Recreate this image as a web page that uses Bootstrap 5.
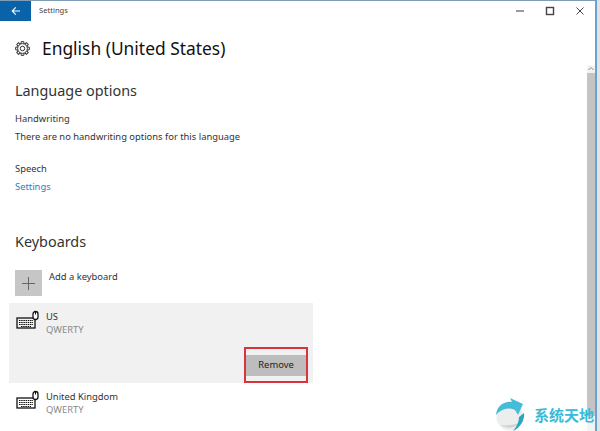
<!DOCTYPE html>
<html lang="en">
  <head>
    <meta charset="UTF-8" />
    <meta name="viewport" content="width=device-width, initial-scale=1.0" />
    <title>Settings</title>
    <link
      href="https://cdn.jsdelivr.net/npm/bootstrap@5.3.0/dist/css/bootstrap.min.css"
      rel="stylesheet"
    />
    <style>
      html, body { height: 431px; overflow: hidden; }
      body {
        background-color: #fff;
        font-family: "Noto Sans", "Open Sans", sans-serif;
        color: #222;
      }
      .app-window {
        position: relative;
        width: 595px;
        height: 431px;
        overflow: hidden;
        border-top: 1px solid #7f9db9;
        background: #fff;
      }
      .desk-edge {
        position: absolute;
        top: 0;
        left: 595px;
        width: 5px;
        height: 431px;
        background: linear-gradient(to right, #6f9fcf 0 2px, #dfe3ea 2px);
      }
      .title-strip { height: 20px; }
      .back-tile {
        width: 31px;
        height: 20px;
        background: #0a62a9;
      }
      .title-text { font-size: 7.6px; color: #444; padding-left: 8px; }
      .win-btn { width: 30px; }
      .head-row { margin-top: 14px; }
      .page-title { font-size: 17.4px; line-height: 26px; color: #111; margin: 0; font-weight: 400; }
      .gear-box { width: 15px; margin-left: 15px; margin-right: 12px; }
      .sect-head { font-size: 14.4px; line-height: 20px; font-weight: 400; color: #333; margin: 0 0 0 15px; }
      .lang-head { margin-top: 20px; }
      .key-head { margin-top: 36px; }
      .body-line { font-size: 9.4px; line-height: 18px; margin-left: 15px; color: #333; }
      .line-a { margin-top: 9px; }
      .line-b { margin-top: 14px; }
      .blue-link { color: #2a80bc; text-decoration: none; }
      .add-row { margin-top: 18px; margin-bottom: 7px; }
      .add-tile { width: 27px; height: 26px; background: #c6c6c6; margin-left: 15px; }
      .add-label { font-size: 9.4px; line-height: 14px; color: #333; padding-left: 7px; }
      .kb-row { width: 304px; margin-left: 9px; padding-left: 7px; padding-top: 7px; }
      .kb-row.is-open { background: #f1f1f1; height: 80px; position: relative; }
      .kb-name { font-size: 9.4px; line-height: 13px; color: #333; }
      .kb-sub { font-size: 9.4px; line-height: 13px; color: #8a8a8a; }
      .kb-ic { width: 24px; margin-right: 6px; }
      .remove-btn {
        position: absolute;
        left: 237px;
        top: 52px;
        width: 60px;
        height: 21px;
        padding: 0;
        border: 0;
        border-radius: 0;
        background: #bdbdbd;
        color: #222;
        font-size: 9.4px;
      }
      .red-mark {
        position: absolute;
        left: 235px;
        top: 44px;
        width: 64px;
        height: 36px;
        border: 2px solid #d9343c;
        pointer-events: none;
      }
      .scroll-rail {
        position: absolute;
        top: 64px;
        left: 587px;
        width: 8px;
        height: 367px;
        background: #f3f3f3;
      }
      .scroll-thumb { position: absolute; top: 8px; left: 0; width: 8px; height: 343px; background: #c4c4c4; }
      .brand-mark { position: absolute; left: 495px; top: 398px; }
      .brand-text {
        position: absolute;
        left: 534px;
        top: 404px;
        font-family: "Noto Sans CJK SC", sans-serif;
        font-weight: 700;
        font-size: 15px;
        line-height: 21px;
        color: #35bcd8;
        white-space: nowrap;
      }
    </style>
  </head>
  <body>
    <div class="app-window">
      <!-- Title bar -->
      <div class="title-strip d-flex align-items-center">
        <div class="back-tile d-flex align-items-center justify-content-center">
          <svg width="10" height="10" viewBox="0 0 10 10" fill="none" stroke="#fff" stroke-width="1.1"><path d="M9 5H1.2M4.8 1.4 1.2 5l3.6 3.6"/></svg>
        </div>
        <div class="title-text flex-grow-1">Settings</div>
        <div class="win-btn d-flex justify-content-center">
          <svg width="10" height="10" viewBox="0 0 10 10" stroke="#555" stroke-width="1.2"><path d="M1 5h8"/></svg>
        </div>
        <div class="win-btn d-flex justify-content-center">
          <svg width="10" height="10" viewBox="0 0 10 10" fill="none" stroke="#444" stroke-width="1.4"><rect x="1.5" y="1.5" width="7" height="7"/></svg>
        </div>
        <div class="win-btn d-flex justify-content-center">
          <svg width="10" height="10" viewBox="0 0 10 10" stroke="#444" stroke-width="1"><path d="M1.5 1.5l7 7M8.5 1.5l-7 7"/></svg>
        </div>
      </div>

      <!-- Heading -->
      <div class="head-row d-flex align-items-center">
        <div class="gear-box d-flex">
          <svg width="15" height="15" viewBox="0 0 24 24" fill="none" stroke="#333" stroke-width="1.6">
            <path d="M9.500 4.500 10 1h4l.5 3.500"/>
            <path transform="rotate(45 12 12)" d="M9.500 4.500 10 1h4l.5 3.500"/>
            <path transform="rotate(90 12 12)" d="M9.500 4.500 10 1h4l.5 3.500"/>
            <path transform="rotate(135 12 12)" d="M9.500 4.500 10 1h4l.5 3.500"/>
            <path transform="rotate(180 12 12)" d="M9.500 4.500 10 1h4l.5 3.500"/>
            <path transform="rotate(225 12 12)" d="M9.500 4.500 10 1h4l.5 3.500"/>
            <path transform="rotate(270 12 12)" d="M9.500 4.500 10 1h4l.5 3.500"/>
            <path transform="rotate(315 12 12)" d="M9.500 4.500 10 1h4l.5 3.500"/>
            <circle cx="12" cy="12" r="7.800"/>
            <circle cx="12" cy="12" r="3.600"/>
          </svg>
        </div>
        <h1 class="page-title">English (United States)</h1>
      </div>

      <h2 class="sect-head lang-head">Language options</h2>
      <div class="body-line line-a">Handwriting</div>
      <div class="body-line">There are no handwriting options for this language</div>
      <div class="body-line line-b">Speech</div>
      <div class="body-line"><a href="#" class="blue-link">Settings</a></div>
      <h2 class="sect-head key-head">Keyboards</h2>

      <!-- Add a keyboard -->
      <div class="d-flex add-row">
        <div class="add-tile d-flex align-items-center justify-content-center">
          <svg width="13" height="13" viewBox="0 0 13 13" stroke="#666" stroke-width="1"><path d="M6.500 0v13M0 6.500h13"/></svg>
        </div>
        <div class="add-label">Add a keyboard</div>
      </div>

      <!-- Keyboard list -->
      <div class="kb-row is-open d-flex align-items-start">
        <svg class="kb-ic" height="20" viewBox="0 0 24 20" fill="none" stroke="#111"><rect x="1" y="8" width="18" height="10" stroke-width="1.300"/><path d="M3 10.500h14M3 12.500h14M3 14.500h14M5 16.500h10" stroke-dasharray="1.500 .7" stroke-width="1"/><rect x="17" y="1.500" width="5" height="8" rx="2.500" fill="#fff" stroke-width="1.300"/><path d="M19.500 1.500v3" stroke-width="1"/></svg>
        <div>
          <div class="kb-name">US</div>
          <div class="kb-sub">QWERTY</div>
        </div>
        <button type="button" class="btn remove-btn">Remove</button>
        <div class="red-mark"></div>
      </div>
      <div class="kb-row d-flex align-items-start">
        <svg class="kb-ic" height="20" viewBox="0 0 24 20" fill="none" stroke="#111"><rect x="1" y="8" width="18" height="10" stroke-width="1.300"/><path d="M3 10.500h14M3 12.500h14M3 14.500h14M5 16.500h10" stroke-dasharray="1.500 .7" stroke-width="1"/><rect x="17" y="1.500" width="5" height="8" rx="2.500" fill="#fff" stroke-width="1.300"/><path d="M19.500 1.500v3" stroke-width="1"/></svg>
        <div>
          <div class="kb-name">United Kingdom</div>
          <div class="kb-sub">QWERTY</div>
        </div>
      </div>

      <!-- Scrollbar -->
      <div class="scroll-rail">
        <svg class="d-block" width="8" height="8" viewBox="0 0 8 8" fill="none" stroke="#888"><path d="M1.500 5 4 2.500 6.500 5"/></svg>
        <div class="scroll-thumb"></div>
      </div>
    </div>
    <div class="desk-edge"></div>

    <!-- Watermark -->
    <svg class="brand-mark" width="34" height="33" viewBox="0 0 34 33">
      <circle cx="15" cy="19" r="13.500" fill="#eceeee"/>
      <path d="M6 27c5 4 13 4 18-2-6 2-13 3-18 2z" fill="#cfd3d3"/>
      <path d="M1 17C2 8 9 3 17 4L15 0l13 6-5 11-3-5C13 9 6 11 1 17z" fill="#45bcd8"/>
      <path d="M24 19l5-4c1 7-4 15-11 18 4-5 6-9 6-14z" fill="#2ea3bf"/>
    </svg>
    <div class="brand-text">系统天地</div>

    <script src="https://cdn.jsdelivr.net/npm/bootstrap@5.3.0/dist/js/bootstrap.bundle.min.js"></script>
  </body>
</html>
